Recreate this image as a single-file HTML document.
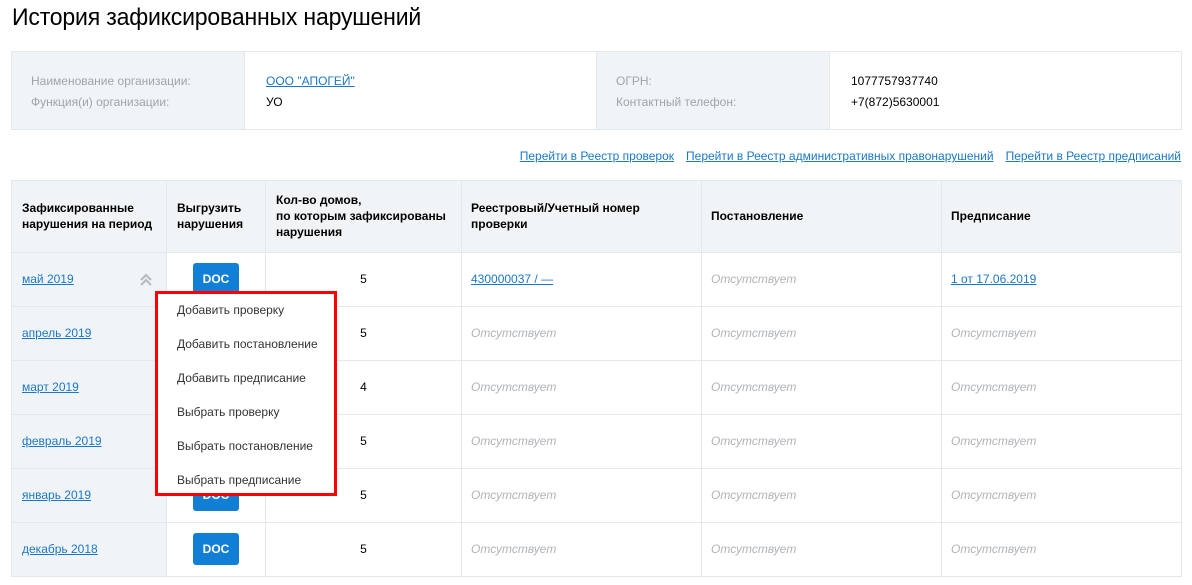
<!DOCTYPE html>
<html><head><meta charset="utf-8"><style>
*{margin:0;padding:0;box-sizing:border-box}
body{width:1192px;height:585px;background:#fff;font-family:"Liberation Sans",Arial,sans-serif;position:relative;overflow:hidden;color:#000}
.a{position:absolute}
h1{position:absolute;left:12px;top:4px;font-weight:normal;font-size:24px;white-space:nowrap;transform:scaleX(.96);transform-origin:left top;letter-spacing:-.2px}
.lbl{color:#a0a4a8;font-size:12px}
.val{font-size:12px}
a,.lnk{color:#1a78c8;text-decoration:underline}
.links{position:absolute;top:149px;right:11px;font-size:12px;white-space:nowrap}
.links span{margin-left:12px}
.cell{position:absolute;border-right:1px solid #e3e8ed;border-bottom:1px solid #e3e8ed;font-size:12px;display:flex;align-items:center;padding-bottom:1px}
.hd{background:#f1f4f7;font-weight:bold;line-height:16px}
.c1{background:#f1f4f7}
.abs{color:#b0b4b8;font-style:italic}
.doc{position:absolute;width:46px;height:32px;background:#127fd6;border-radius:3px;color:#fff;font-weight:bold;font-size:12px;display:flex;align-items:center;justify-content:center}
.menu{position:absolute;left:155px;top:291px;width:182px;height:205px;border:3px solid #f00;background:#fff;font-size:12px;color:#333}
.menu div{position:absolute;left:19px}
</style></head><body>
<h1>История зафиксированных нарушений</h1>

<div class="a" style="left:11px;top:51px;width:1171px;height:79px;border:1px solid #e3e8ed"></div>
<div class="a" style="left:12px;top:52px;width:233px;height:77px;background:#f1f4f7;border-right:1px solid #e3e8ed"></div>
<div class="a" style="left:596px;top:52px;width:234px;height:77px;background:#f1f4f7;border-left:1px solid #e3e8ed;border-right:1px solid #e3e8ed"></div>
<div class="a lbl" style="left:31px;top:74px">Наименование организации:</div>
<div class="a lbl" style="left:31px;top:95px">Функция(и) организации:</div>
<div class="a val lnk" style="left:266px;top:74px">ООО "АПОГЕЙ"</div>
<div class="a val" style="left:266px;top:95px">УО</div>
<div class="a lbl" style="left:616px;top:74px">ОГРН:</div>
<div class="a lbl" style="left:616px;top:95px">Контактный телефон:</div>
<div class="a val" style="left:851px;top:74px">1077757937740</div>
<div class="a val" style="left:851px;top:95px">+7(872)5630001</div>

<div class="links"><span class="lnk">Перейти в Реестр проверок</span><span class="lnk">Перейти в Реестр административных правонарушений</span><span class="lnk">Перейти в Реестр предписаний</span></div>

<div class="a" style="left:11px;top:180px;width:1171px;height:397px;border-left:1px solid #e3e8ed;border-top:1px solid #e3e8ed"></div>
<div class="cell hd" style="left:12px;top:181px;width:155px;height:72px;padding-left:10px">Зафиксированные<br>нарушения на период</div>
<div class="cell hd" style="left:167px;top:181px;width:99px;height:72px;padding-left:10px">Выгрузить<br>нарушения</div>
<div class="cell hd" style="left:266px;top:181px;width:196px;height:72px;padding-left:10px">Кол-во домов,<br>по которым зафиксированы<br>нарушения</div>
<div class="cell hd" style="left:462px;top:181px;width:240px;height:72px;padding-left:9px">Реестровый/Учетный номер<br>проверки</div>
<div class="cell hd" style="left:702px;top:181px;width:240px;height:72px;padding-left:9px">Постановление</div>
<div class="cell hd" style="left:942px;top:181px;width:240px;height:72px;padding-left:9px">Предписание</div>

<div class="cell c1" style="left:12px;top:253px;width:155px;height:54px;padding-left:10px"><span class="lnk">май 2019</span></div>
<div class="cell c1" style="left:12px;top:307px;width:155px;height:54px;padding-left:10px"><span class="lnk">апрель 2019</span></div>
<div class="cell c1" style="left:12px;top:361px;width:155px;height:54px;padding-left:10px"><span class="lnk">март 2019</span></div>
<div class="cell c1" style="left:12px;top:415px;width:155px;height:54px;padding-left:10px"><span class="lnk">февраль 2019</span></div>
<div class="cell c1" style="left:12px;top:469px;width:155px;height:54px;padding-left:10px"><span class="lnk">январь 2019</span></div>
<div class="cell c1" style="left:12px;top:523px;width:155px;height:54px;padding-left:10px"><span class="lnk">декабрь 2018</span></div>

<svg class="a" style="left:139px;top:273px" width="14" height="14" viewBox="0 0 14 14"><path d="M2 7 L7 2 L12 7 M2 12 L7 7 L12 12" stroke="#b8bcc0" stroke-width="2.2" fill="none"/></svg>

<div class="cell" style="left:167px;top:253px;width:99px;height:54px"></div>
<div class="cell" style="left:167px;top:307px;width:99px;height:54px"></div>
<div class="cell" style="left:167px;top:361px;width:99px;height:54px"></div>
<div class="cell" style="left:167px;top:415px;width:99px;height:54px"></div>
<div class="cell" style="left:167px;top:469px;width:99px;height:54px"></div>
<div class="cell" style="left:167px;top:523px;width:99px;height:54px"></div>

<div class="cell" style="left:266px;top:253px;width:196px;height:54px;justify-content:center">5</div>
<div class="cell" style="left:266px;top:307px;width:196px;height:54px;justify-content:center">5</div>
<div class="cell" style="left:266px;top:361px;width:196px;height:54px;justify-content:center">4</div>
<div class="cell" style="left:266px;top:415px;width:196px;height:54px;justify-content:center">5</div>
<div class="cell" style="left:266px;top:469px;width:196px;height:54px;justify-content:center">5</div>
<div class="cell" style="left:266px;top:523px;width:196px;height:54px;justify-content:center">5</div>

<div class="cell" style="left:462px;top:253px;width:240px;height:54px;padding-left:9px"><span class="lnk">430000037 / —</span></div>
<div class="cell abs" style="left:462px;top:307px;width:240px;height:54px;padding-left:9px">Отсутствует</div>
<div class="cell abs" style="left:462px;top:361px;width:240px;height:54px;padding-left:9px">Отсутствует</div>
<div class="cell abs" style="left:462px;top:415px;width:240px;height:54px;padding-left:9px">Отсутствует</div>
<div class="cell abs" style="left:462px;top:469px;width:240px;height:54px;padding-left:9px">Отсутствует</div>
<div class="cell abs" style="left:462px;top:523px;width:240px;height:54px;padding-left:9px">Отсутствует</div>

<div class="cell abs" style="left:702px;top:253px;width:240px;height:54px;padding-left:9px">Отсутствует</div>
<div class="cell abs" style="left:702px;top:307px;width:240px;height:54px;padding-left:9px">Отсутствует</div>
<div class="cell abs" style="left:702px;top:361px;width:240px;height:54px;padding-left:9px">Отсутствует</div>
<div class="cell abs" style="left:702px;top:415px;width:240px;height:54px;padding-left:9px">Отсутствует</div>
<div class="cell abs" style="left:702px;top:469px;width:240px;height:54px;padding-left:9px">Отсутствует</div>
<div class="cell abs" style="left:702px;top:523px;width:240px;height:54px;padding-left:9px">Отсутствует</div>

<div class="cell" style="left:942px;top:253px;width:240px;height:54px;padding-left:9px"><span class="lnk">1 от 17.06.2019</span></div>
<div class="cell abs" style="left:942px;top:307px;width:240px;height:54px;padding-left:9px">Отсутствует</div>
<div class="cell abs" style="left:942px;top:361px;width:240px;height:54px;padding-left:9px">Отсутствует</div>
<div class="cell abs" style="left:942px;top:415px;width:240px;height:54px;padding-left:9px">Отсутствует</div>
<div class="cell abs" style="left:942px;top:469px;width:240px;height:54px;padding-left:9px">Отсутствует</div>
<div class="cell abs" style="left:942px;top:523px;width:240px;height:54px;padding-left:9px">Отсутствует</div>

<div class="doc" style="left:193px;top:263px">DOC</div>
<div class="doc" style="left:193px;top:317px">DOC</div>
<div class="doc" style="left:193px;top:371px">DOC</div>
<div class="doc" style="left:193px;top:425px">DOC</div>
<div class="doc" style="left:193px;top:479px">DOC</div>
<div class="doc" style="left:193px;top:533px">DOC</div>

<div class="menu">
<div style="top:9px">Добавить проверку</div>
<div style="top:43px">Добавить постановление</div>
<div style="top:77px">Добавить предписание</div>
<div style="top:111px">Выбрать проверку</div>
<div style="top:145px">Выбрать постановление</div>
<div style="top:179px">Выбрать предписание</div>
</div>
</body></html>
